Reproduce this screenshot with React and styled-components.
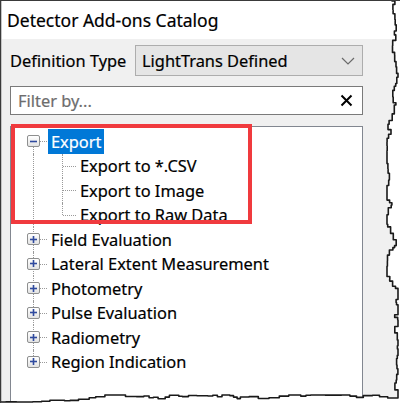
import React from "react";
import styled, { createGlobalStyle } from "styled-components";

const GlobalStyle = createGlobalStyle`
  html, body { margin: 0; padding: 0; background: #ffffff; }
  body { font-family: "Segoe UI", "Noto Sans", sans-serif; color: #000; }
`;

const FONT = `"Segoe UI", "Noto Sans", "Open Sans", sans-serif`;
const ROW_H = 24.5;
const TEXT_SIZE = "16.4px";

const Window = styled.div`
  position: relative;
  width: 400px;
  height: 403px;
  overflow: hidden;
  box-sizing: border-box;
  border-left: 1px solid #3a3a3a;
  border-top: 1px solid #3a3a3a;
  display: flex;
  flex-direction: column;
  font-family: ${FONT};
  -webkit-text-stroke: 0.2px currentColor;
`;

const Frame = styled.div`
  flex: 1;
  display: flex;
  flex-direction: column;
  border-left: 1px solid #c4c4c4;
  min-height: 0;
`;

const TitleBar = styled.div`
  height: 38px;
  flex: none;
  background: #ffffff;
  display: flex;
  align-items: center;
  padding-left: 5px;
  font-size: 17.5px;
  color: #000;
`;

const Body = styled.div`
  flex: 1;
  min-height: 0;
  background: #f0f0f0;
  padding: 6px 37px 0 8px;
  display: flex;
  flex-direction: column;
`;

const FieldRow = styled.div`
  display: flex;
  align-items: center;
  height: 31px;
  flex: none;
`;

const Label = styled.div`
  width: 125px;
  flex: none;
  font-size: ${TEXT_SIZE};
`;

const Combo = styled.div`
  flex: 1;
  height: 31px;
  box-sizing: border-box;
  background: #e5e5e5;
  border: 1px solid #adadad;
  display: flex;
  align-items: center;
  justify-content: space-between;
  padding: 0 7px 0 6px;
  font-size: ${TEXT_SIZE};
`;

const FilterBox = styled.div`
  margin-top: 10px;
  height: 29px;
  flex: none;
  box-sizing: border-box;
  background: #ffffff;
  border: 1px solid #7a7a7a;
  display: flex;
  align-items: center;
  justify-content: space-between;
  padding: 0 9px 0 7px;
  font-size: ${TEXT_SIZE};
`;

const Placeholder = styled.span`
  color: #6d6d6d;
`;

const TreeBox = styled.div`
  position: relative;
  margin-top: 11px;
  flex: 1;
  background: #ffffff;
  border: 1px solid #828790;
  padding-top: 2px;
`;

const Highlight = styled.div`
  position: absolute;
  left: 0;
  top: -3px;
  width: 241px;
  height: 100px;
  box-sizing: border-box;
  border: 4px solid #f03a3e;
  pointer-events: none;
`;

const Row = styled.div`
  display: flex;
  align-items: center;
  height: ${ROW_H}px;
  font-size: ${TEXT_SIZE};
`;

const Gutter = styled.div`
  position: relative;
  flex: none;
  align-self: stretch;
  width: ${(p) => p.$w}px;

  &::before {
    content: "";
    display: ${(p) => (p.$v ? "block" : "none")};
    position: absolute;
    left: ${(p) => p.$x}px;
    top: ${(p) => (p.$v === "bottom" ? "50%" : "0")};
    bottom: ${(p) => (p.$v === "top" ? "50%" : "0")};
    border-left: 1px dotted #9a9a9a;
  }

  &::after {
    content: "";
    display: ${(p) => (p.$h ? "block" : "none")};
    position: absolute;
    left: ${(p) => p.$x + 1}px;
    right: 1px;
    top: 50%;
    border-top: 1px dotted #9a9a9a;
  }
`;

const Expander = styled.div`
  position: absolute;
  z-index: 1;
  left: ${(p) => p.$x - 6}px;
  top: 50%;
  transform: translateY(-50%);
  width: 13px;
  height: 12px;
  box-sizing: border-box;
  border: 1px solid #8e8f8f;
  border-radius: 2px;
  background: linear-gradient(#ffffff, #e3e3e3);
  display: flex;
  align-items: center;
  justify-content: center;
`;

const Glyph = styled.svg`
  display: block;
`;

const ItemText = styled.span`
  padding: 0 3px;
  line-height: ${(p) => (p.$selected ? "25px" : "normal")};
  background: ${(p) => (p.$selected ? "#0078d7" : "transparent")};
  color: ${(p) => (p.$selected ? "#ffffff" : "#000000")};
  white-space: nowrap;
`;

const Overlay = styled.svg`
  position: absolute;
  left: -1px;
  top: -1px;
  z-index: 5;
  pointer-events: none;
`;

function PlusMinus({ open }) {
  return (
    <Glyph width="9" height="9" viewBox="0 0 9 9">
      <line x1="1" y1="4.5" x2="8" y2="4.5" stroke="#2f4a9e" strokeWidth="1.6" />
      {!open && <line x1="4.5" y1="1" x2="4.5" y2="8" stroke="#2f4a9e" strokeWidth="1.6" />}
    </Glyph>
  );
}

const tree = [
  { label: "Export", open: true, selected: true, children: ["Export to *.CSV", "Export to Image", "Export to Raw Data"] },
  { label: "Field Evaluation" },
  { label: "Lateral Extent Measurement" },
  { label: "Photometry" },
  { label: "Pulse Evaluation" },
  { label: "Radiometry" },
  { label: "Region Indication" },
];

// deterministic jagged torn edge
function makeTorn() {
  let s = 7;
  const rnd = () => {
    s = (s * 16807) % 2147483647;
    return s / 2147483647;
  };
  const pts = [];
  let y = -2;
  let x = 391;
  while (y < 394) {
    pts.push([x, y]);
    const step = 2 + rnd() * 5;
    y += step;
    pts.push([x, y]);
    x = Math.min(397, Math.max(386, x + (rnd() - 0.5) * 7));
  }
  pts.push([x, 397]);
  let bx = x;
  let by = 397;
  while (bx > -2) {
    const step = 3 + rnd() * 8;
    bx -= step;
    pts.push([bx, by]);
    by = Math.min(401, Math.max(394, by + (rnd() - 0.5) * 4));
    pts.push([bx, by]);
  }
  return pts.map(([a, b]) => `${a.toFixed(1)},${b.toFixed(1)}`);
}
const tornPts = makeTorn();
const tornLine = "M" + tornPts.join(" L");
const tornFill = `M402,-2 L${tornPts.join(" L")} L-2,405 L402,405 Z`;

export default function App() {
  const rows = [];
  tree.forEach((node, i) => {
    const isFirst = i === 0;
    const isLast = i === tree.length - 1;
    rows.push(
      <Row key={node.label}>
        <Gutter $w={37} $x={22} $v={isFirst ? "bottom" : isLast ? "top" : "full"} $h>
          <Expander $x={22}>
            <PlusMinus open={node.open} />
          </Expander>
        </Gutter>
        <ItemText $selected={node.selected}>{node.label}</ItemText>
      </Row>
    );
    if (node.open && node.children) {
      node.children.forEach((c, j) => {
        const lastChild = j === node.children.length - 1;
        rows.push(
          <Row key={c}>
            <Gutter $w={37} $x={22} $v={isLast ? null : "full"} />
            <Gutter $w={29} $x={14} $v={lastChild ? "top" : "full"} $h />
            <ItemText>{c}</ItemText>
          </Row>
        );
      });
    }
  });

  return (
    <>
      <GlobalStyle />
      <Window>
        <Frame>
          <TitleBar>Detector Add-ons Catalog</TitleBar>
          <Body>
            <FieldRow>
              <Label>Definition Type</Label>
              <Combo>
                <span>LightTrans Defined</span>
                <svg width="14" height="8" viewBox="0 0 14 8">
                  <polyline points="1,1 7,7 13,1" fill="none" stroke="#6a6a6a" strokeWidth="1.2" />
                </svg>
              </Combo>
            </FieldRow>
            <FilterBox>
              <Placeholder>Filter by...</Placeholder>
              <svg width="13" height="13" viewBox="0 0 13 13">
                <path d="M1.5,1.5 L11.5,11.5 M11.5,1.5 L1.5,11.5" stroke="#000" strokeWidth="2" />
              </svg>
            </FilterBox>
            <TreeBox>
              {rows}
              <Highlight />
            </TreeBox>
          </Body>
        </Frame>
        <Overlay width="402" height="405" viewBox="-1 -1 402 405">
          <path d={tornFill} fill="#ffffff" />
          <path d={tornLine} fill="none" stroke="#1a1a1a" strokeWidth="1.6" strokeLinejoin="round" />
        </Overlay>
      </Window>
    </>
  );
}
